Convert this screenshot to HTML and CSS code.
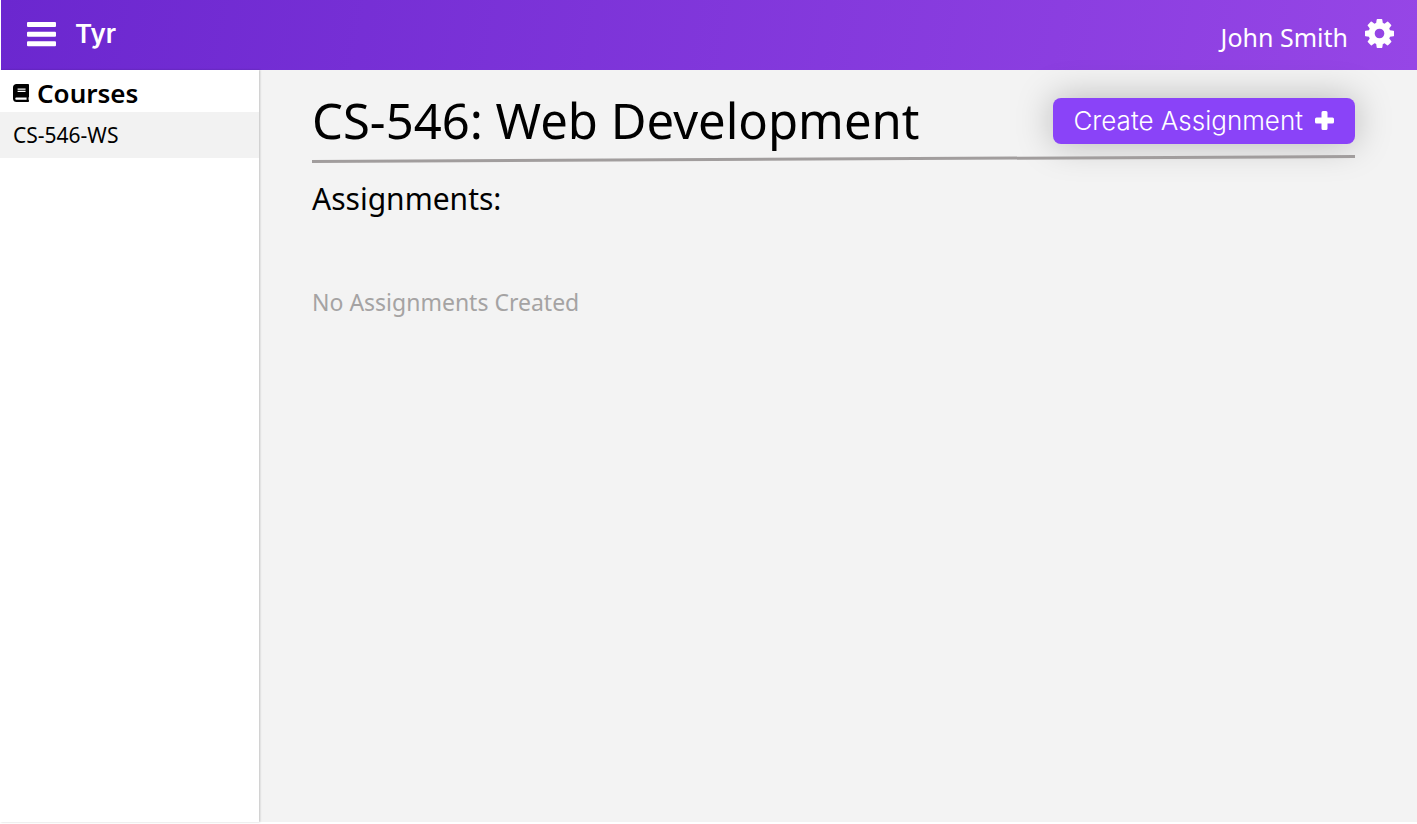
FILE: index.html
```html
<!DOCTYPE html>
<html lang="en">
<head>
<meta charset="utf-8">
<title>Tyr</title>
<meta name="viewport" content="width=device-width, initial-scale=1">
<link rel="stylesheet" href="styles.css">
</head>
<body>
<header class="topbar">
  <button class="icon-button" type="button" aria-label="Toggle menu">
    <svg class="icon-menu" viewBox="0 0 29 24" aria-hidden="true"><rect width="29" height="5" rx="1"/><rect y="9.700" width="29" height="5" rx="1"/><rect y="19.200" width="29" height="5" rx="1"/></svg>
  </button>
  <a class="brand" href="#">Tyr</a>
  <span class="user">John Smith</span>
  <button class="icon-button" type="button" aria-label="Settings">
    <svg class="icon-cog" viewBox="0 128 1536 1536" aria-hidden="true"><path d="M1024 896q0-106-75-181t-181-75-181 75-75 181 75 181 181 75 181-75 75-181zm512-109v222q0 12-8 23t-20 13l-185 28q-19 54-39 91 35 50 107 138 10 12 10 25t-9 23q-27 37-99 108t-94 71q-12 0-26-9l-138-108q-44 23-91 38-16 136-29 186-7 28-36 28h-222q-14 0-24.500-8.500t-11.500-21.500l-28-184q-49-16-90-37l-141 107q-10 9-25 9-14 0-25-11-126-114-165-168-7-10-7-23 0-12 8-23 15-21 51-66.500t54-70.500q-27-50-41-99l-183-27q-13-2-21-12.500t-8-23.500v-222q0-12 8-23t19-13l186-28q14-46 39-92-40-57-107-138-10-12-10-24 0-10 9-23 26-36 98.500-107.500t94.500-71.500q13 0 26 10l138 107q44-23 91-38 16-136 29-186 7-28 36-28h222q14 0 24.500 8.500t11.500 21.500l28 184q49 16 90 37l142-107q9-9 24-9 13 0 25 10 129 119 165 170 7 8 7 22 0 12-8 23-15 21-51 66.500t-54 70.500q26 50 41 98l183 28q13 2 21 12.500t8 23.500z"/></svg>
  </button>
</header>
<div class="layout">
  <nav class="sidebar" aria-label="Courses">
    <h2 class="sidebar-title">
      <svg class="icon-book" viewBox="0 0 448 512" preserveAspectRatio="none" aria-hidden="true"><path d="M448 360V24c0-13.300-10.700-24-24-24H96C43 0 0 43 0 96v320c0 53 43 96 96 96h328c13.300 0 24-10.700 24-24v-16c0-7.500-3.500-14.300-8.900-18.700-4.200-15.400-4.200-59.300 0-74.700 5.400-4.300 8.900-11.100 8.900-18.600zM128 134c0-3.300 2.700-6 6-6h212c3.300 0 6 2.700 6 6v20c0 3.300-2.700 6-6 6H134c-3.300 0-6-2.700-6-6v-20zm0 64c0-3.300 2.700-6 6-6h212c3.300 0 6 2.700 6 6v20c0 3.300-2.700 6-6 6H134c-3.300 0-6-2.700-6-6v-20zm253.400 250H96c-17.700 0-32-14.300-32-32 0-17.600 14.400-32 32-32h285.400c-1.900 17.100-1.900 46.900 0 64z"/></svg>
      Courses
    </h2>
    <a class="course-link" href="#">CS-546-WS</a>
  </nav>
  <main class="content">
    <div class="heading">
      <h1 class="title">CS-546: Web Development</h1>
      <button class="create" type="button">
        Create Assignment
        <svg class="icon-plus" viewBox="0 0 19 19" aria-hidden="true"><path d="M8 0h3q1.500 0 1.500 1.500v5h5q1.500 0 1.500 1.500v3q0 1.500-1.500 1.500h-5v5q0 1.500-1.500 1.500H8q-1.500 0-1.500-1.500v-5h-5Q0 12.500 0 11V8q0-1.500 1.500-1.500h5v-5Q6.500 0 8 0z"/></svg>
      </button>
    </div>
    <svg class="rule" viewBox="0 0 1043 8" preserveAspectRatio="none" aria-hidden="true"><path d="M0 5L1043 0v3L0 8z"/></svg>
    <h2 class="subtitle">Assignments:</h2>
    <p class="empty">No Assignments Created</p>
  </main>
</div>
</body>
</html>
```
FILE: styles.css
```css
* {
  box-sizing: border-box;
}

body {
  display: flex;
  flex-direction: column;
  min-height: 100vh;
  margin: 0;
  padding-bottom: 2px;
  background: #fff;
  color: #000;
  font-family: "Noto Sans", "Open Sans", sans-serif;
}

h1, h2, p {
  margin: 0;
  font-weight: 400;
}

button {
  border: 0;
  font: inherit;
  cursor: pointer;
}

a {
  color: inherit;
  text-decoration: none;
}

svg {
  display: block;
  fill: currentColor;
}

.topbar {
  display: flex;
  align-items: center;
  height: 70px;
  margin-left: 1px;
  padding: 0 23px 3px 26px;
  background: linear-gradient(100deg, #6b27cf, #9646e6);
  color: #fff;
}

.icon-button {
  padding: 0;
  background: none;
  color: inherit;
}

.icon-menu {
  width: 29px;
  height: 24px;
  overflow: visible;
}

.icon-cog {
  width: 29px;
  height: 29px;
}

.brand {
  margin-left: 19px;
  font-family: Inter, sans-serif;
  font-size: 26px;
  font-weight: 600;
}

.user {
  margin: 0 17px 0 auto;
  padding-top: 6px;
  font-size: 25px;
  line-height: 32px;
}

.layout {
  display: flex;
  flex: 1;
  background: #f3f3f3;
}

.sidebar {
  flex: none;
  width: 259px;
  background: #fff;
  box-shadow: 1px 0 2px rgba(0, 0, 0, 0.2);
}

.sidebar-title {
  display: flex;
  align-items: center;
  gap: 8px;
  height: 42px;
  padding: 4px 13px 0;
  font-size: 26px;
  font-weight: 600;
}

.icon-book {
  width: 16px;
  height: 18px;
}

.course-link {
  display: block;
  padding: 0 13px;
  background: #f2f2f2;
  font-size: 21px;
  line-height: 46px;
}

.content {
  flex: 1;
  padding: 21px 62px 0 53px;
}

.heading {
  display: flex;
  justify-content: space-between;
  align-items: center;
}

.title {
  font-size: 49px;
  line-height: 58px;
}

.create {
  display: flex;
  align-items: center;
  gap: 12px;
  height: 46px;
  margin-top: 2px;
  padding: 0 21px 1px 20px;
  border-radius: 8px;
  background: #8a43f8;
  box-shadow: 0 0 36px rgba(0, 0, 0, 0.25);
  color: #fff;
  font-family: Inter, sans-serif;
  font-size: 26px;
  font-weight: 300;
}

.icon-plus {
  width: 19px;
  height: 19px;
}

.rule {
  width: 100%;
  height: 8px;
  margin-top: 6px;
  fill: #a19d9d;
}

.subtitle {
  margin-top: 15px;
  font-size: 30px;
  line-height: 42px;
}

.empty {
  margin-top: 66px;
  color: #a5a3a3;
  font-size: 23px;
  line-height: 32px;
}
```
